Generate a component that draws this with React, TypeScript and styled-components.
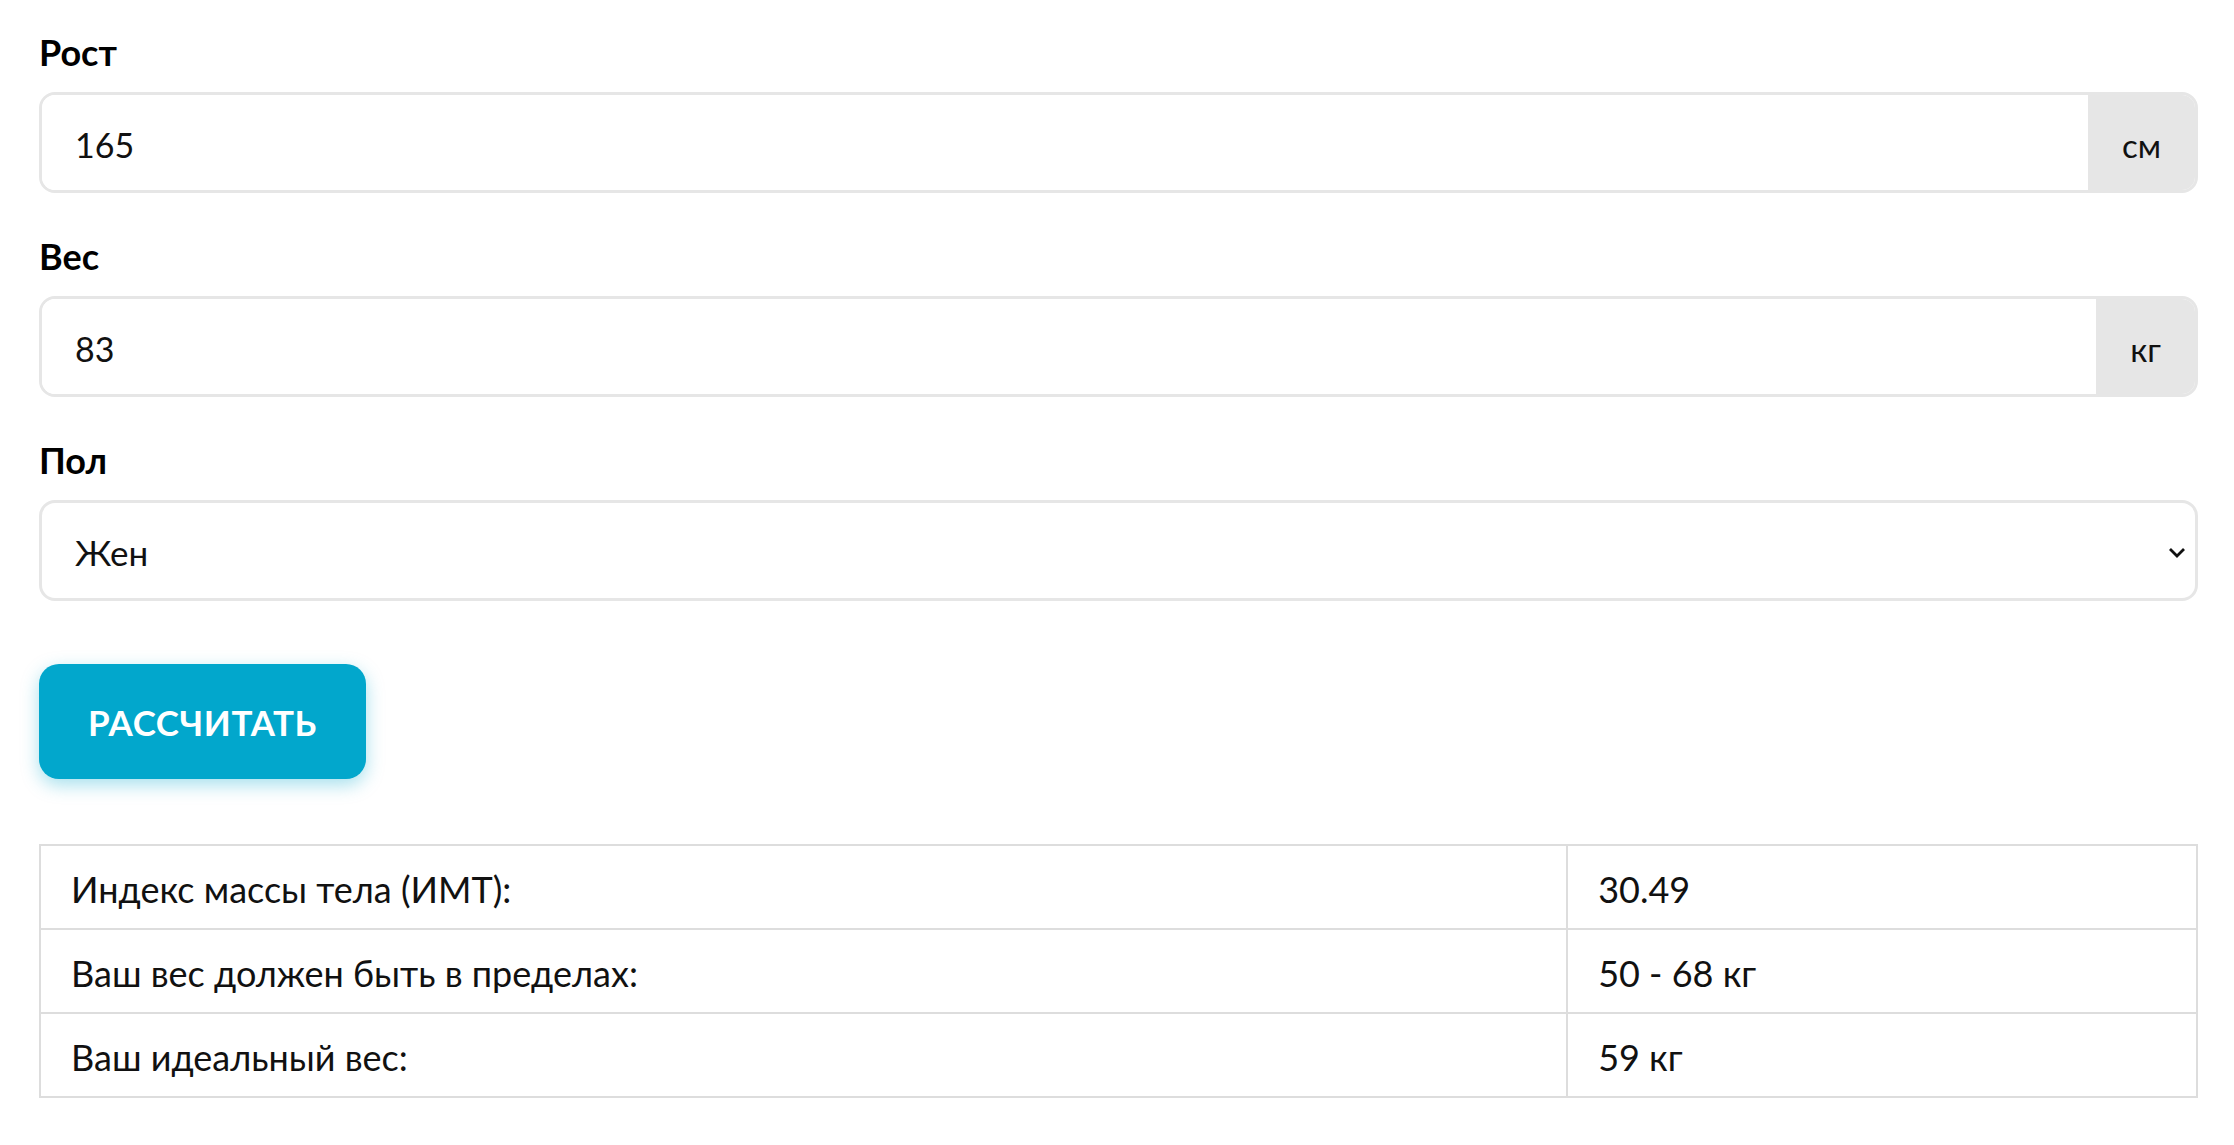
import React from "react";
import styled, { createGlobalStyle } from "styled-components";

const GlobalStyle = createGlobalStyle`
  * {
    box-sizing: border-box;
  }
  body {
    margin: 0;
    background: #fff;
    color: #111;
    font-family: Lato, "Noto Sans", sans-serif;
  }
`;

const results = [
  { title: "Индекс массы тела (ИМТ):", value: "30.49" },
  { title: "Ваш вес должен быть в пределах:", value: "50 - 68 кг" },
  { title: "Ваш идеальный вес:", value: "59 кг" },
];

export default function App() {
  return (
    <>
      <GlobalStyle />
      <Page>
        <Field>
          <Label htmlFor="height">Рост</Label>
          <InputGroup>
            <TextInput id="height" defaultValue="165" />
            <Addon>см</Addon>
          </InputGroup>
        </Field>
        <Field>
          <Label htmlFor="weight">Вес</Label>
          <InputGroup>
            <TextInput id="weight" defaultValue="83" />
            <Addon>кг</Addon>
          </InputGroup>
        </Field>
        <Field>
          <Label htmlFor="sex">Пол</Label>
          <SelectWrap>
            <Select id="sex" defaultValue="f">
              <option value="f">Жен</option>
              <option value="m">Муж</option>
            </Select>
            <Chevron width="18" height="11" viewBox="0 0 18 11">
              <polyline points="2,2 9,9 16,2" />
            </Chevron>
          </SelectWrap>
        </Field>
        <CalcButton type="button">Рассчитать</CalcButton>
        <ResultTable>
          <tbody>
            {results.map((r) => (
              <tr key={r.title}>
                <TitleCell>{r.title}</TitleCell>
                <ValueCell>{r.value}</ValueCell>
              </tr>
            ))}
          </tbody>
        </ResultTable>
      </Page>
    </>
  );
}

const Page = styled.main`
  padding: 33px 36px 48px 39px;
`;

const Field = styled.div`
  margin-bottom: 44px;
`;

const Label = styled.label`
  display: block;
  margin-bottom: 21px;
  font-size: 36px;
  line-height: 38px;
  font-weight: 700;
  color: #000;
`;

const InputGroup = styled.div`
  display: flex;
  height: 101px;
  border: 3px solid #e6e6e6;
  border-radius: 16px;
  overflow: hidden;
`;

const TextInput = styled.input`
  flex: 1;
  min-width: 0;
  border: none;
  outline: none;
  padding: 4px 33px 0;
  background: #fff;
  font-family: inherit;
  font-size: 34px;
  color: #111;
`;

const Addon = styled.span`
  display: flex;
  align-items: center;
  padding: 4px 34px 0;
  background: #e6e6e6;
  font-size: 33px;
  color: #111;
`;

const SelectWrap = styled.div`
  position: relative;
`;

const Select = styled.select`
  display: block;
  width: 100%;
  height: 101px;
  padding: 3px 33px 0;
  border: 3px solid #e6e6e6;
  border-radius: 16px;
  background: #fff;
  appearance: none;
  outline: none;
  font-family: inherit;
  font-size: 35px;
  color: #111;
`;

const Chevron = styled.svg`
  position: absolute;
  right: 12px;
  top: 50%;
  margin-top: -4px;
  fill: none;
  stroke: #111;
  stroke-width: 2.8;
`;

const CalcButton = styled.button`
  display: block;
  margin-top: 63px;
  height: 115px;
  padding: 0 49px;
  border: none;
  border-radius: 20px;
  background: #02a7cc;
  box-shadow: 0 6px 18px rgba(2, 167, 204, 0.35);
  color: #fff;
  font-family: inherit;
  font-size: 35px;
  font-weight: 700;
  letter-spacing: 0.6px;
  text-transform: uppercase;
  cursor: pointer;
`;

const ResultTable = styled.table`
  width: 100%;
  margin-top: 65px;
  border-collapse: collapse;
`;

const TitleCell = styled.td`
  width: 70.8%;
  height: 84px;
  padding: 4px 30px 0;
  border: 2px solid #dddddd;
  font-size: 36px;
  color: #111;
`;

const ValueCell = styled(TitleCell)`
  width: auto;
`;
